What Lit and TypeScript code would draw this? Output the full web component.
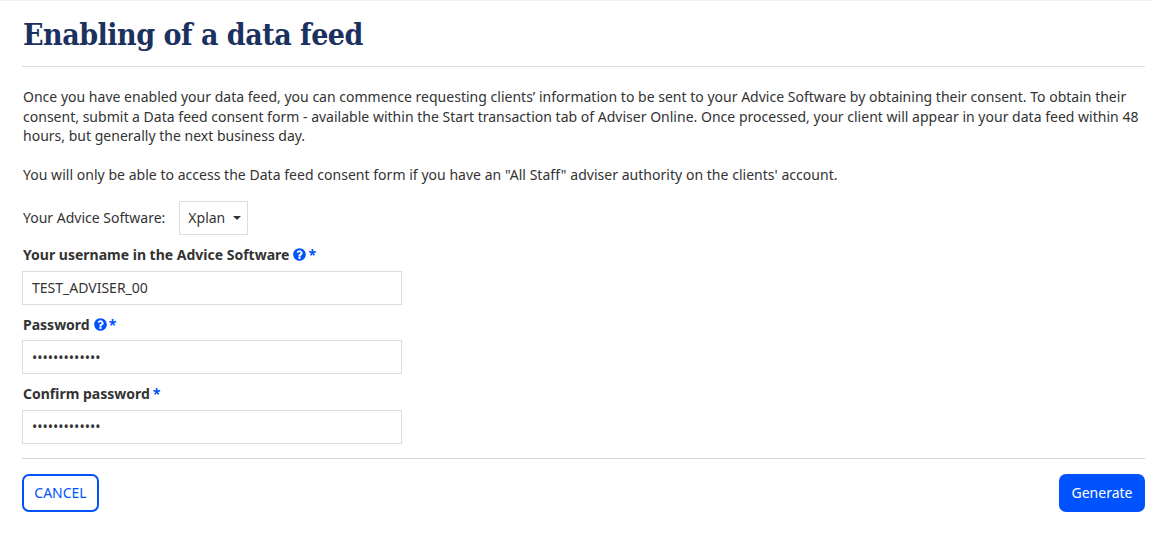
import { LitElement, html, css } from "lit";
import { customElement } from "lit/decorators.js";

const help = html`<svg class="help" viewBox="0 0 512 512" width="13" height="13" aria-hidden="true"><path fill="#0052ff" d="M504 256c0 137-111 248-248 248S8 393 8 256C8 119 119 8 256 8s248 111 248 248zM262.700 90c-54.500 0-89.300 23-116.500 63.800-3.500 5.300-2.400 12.400 2.700 16.300l34.700 26.300c5.200 3.900 12.600 3 16.700-2.100 17.900-22.700 30.100-35.800 57.300-35.800 20.400 0 45.700 13.100 45.700 32.900 0 15-12.400 22.700-32.600 34-23.600 13.200-54.800 29.700-54.800 70.900V320c0 6.600 5.400 12 12 12h56c6.600 0 12-5.400 12-12v-1.300c0-28.600 83.500-29.800 83.500-107.100C380 153.300 319.600 90 262.700 90zM256 348c-25.400 0-46 20.600-46 46 0 25.400 20.600 46 46 46s46-20.600 46-46c0-25.400-20.600-46-46-46z"/></svg>`;

@customElement("app-root")
export class AppRoot extends LitElement {
  static styles = css`
    :host {
      display: block;
      min-height: 545px;
      box-sizing: border-box;
      border-top: 1px solid #f0f0f0;
      padding: 0 7px 0 22px;
      background: #fff;
      color: #333;
      font-family: "Noto Sans", "Open Sans", sans-serif;
      font-size: 14px;
      line-height: 19.5px;
    }
    h1 {
      margin: 0;
      height: 66px;
      box-sizing: border-box;
      padding: 13px 0 0 1px;
      border-bottom: 1px solid #ddd;
      font-family: "DejaVu Serif Condensed", "DejaVu Serif", serif;
      font-size: 30px;
      line-height: 42px;
      font-weight: 700;
      letter-spacing: -0.5px;
      color: #1b3160;
    }
    p {
      margin: 0;
      padding-left: 1px;
      letter-spacing: 0.012px;
    }
    .intro {
      margin-top: 20px;
    }
    .note {
      margin-top: 19px;
      letter-spacing: 0.03px;
    }
    .software {
      display: flex;
      align-items: center;
      gap: 14px;
      margin-top: 17px;
      padding-left: 1px;
    }
    .select {
      display: flex;
      align-items: center;
      justify-content: space-between;
      width: 69px;
      height: 34px;
      box-sizing: border-box;
      padding: 0 6px 0 8px;
      border: 1px solid #ddd;
    }
    .caret {
      width: 0;
      height: 0;
      border-left: 4.5px solid transparent;
      border-right: 4.5px solid transparent;
      border-top: 4.5px solid #333;
    }
    .field {
      display: flex;
      flex-direction: column;
      width: 380px;
    }
    .field label {
      display: flex;
      align-items: center;
      gap: 3px;
      height: 20px;
      margin-bottom: 6px;
      padding-left: 1px;
      font-weight: 700;
    }
    .first {
      margin-top: 9.8px;
    }
    .next {
      margin-top: 9.5px;
    }
    .req {
      color: #0052ff;
    }
    .help {
      display: block;
      margin: 0 -1px 0 1px;
    }
    input {
      box-sizing: border-box;
      width: 100%;
      height: 34px;
      padding: 0 9px;
      border: 1px solid #ddd;
      border-radius: 0;
      outline: none;
      color: #333;
      font: inherit;
    }
    .actions {
      display: flex;
      justify-content: space-between;
      margin-top: 14px;
      padding-top: 15px;
      border-top: 1px solid #d4d4d4;
    }
    .btn {
      height: 38px;
      box-sizing: border-box;
      border-radius: 7px;
      font: inherit;
      padding: 0;
    }
    .cancel {
      width: 77px;
      border: 2px solid #0052ff;
      background: #fff;
      color: #0052ff;
    }
    .generate {
      width: 86px;
      border: none;
      background: #0052ff;
      color: #fff;
    }
  `;

  render() {
    return html`
      <h1>Enabling of a data feed</h1>
      <p class="intro">Once you have enabled your data feed, you can commence requesting clients’ information to be sent to your Advice Software by obtaining their consent. To obtain their consent, submit a Data feed consent form - available within the Start transaction tab of Adviser Online. Once processed, your client will appear in your data feed within 48 hours, but generally the next business day.</p>
      <p class="note">You will only be able to access the Data feed consent form if you have an "All Staff" adviser authority on the clients' account.</p>
      <div class="software">
        <span>Your Advice Software:</span>
        <div class="select"><span>Xplan</span><span class="caret"></span></div>
      </div>
      <div class="field first">
        <label>Your username in the Advice Software ${help}<span class="req">*</span></label>
        <input type="text" .value=${"TEST_ADVISER_00"} />
      </div>
      <div class="field next">
        <label>Password ${help}<span class="req">*</span></label>
        <input type="password" .value=${"Password12345"} />
      </div>
      <div class="field next">
        <label>Confirm password <span class="req">*</span></label>
        <input type="password" .value=${"Password12345"} />
      </div>
      <div class="actions">
        <button class="btn cancel">CANCEL</button>
        <button class="btn generate">Generate</button>
      </div>
    `;
  }
}
